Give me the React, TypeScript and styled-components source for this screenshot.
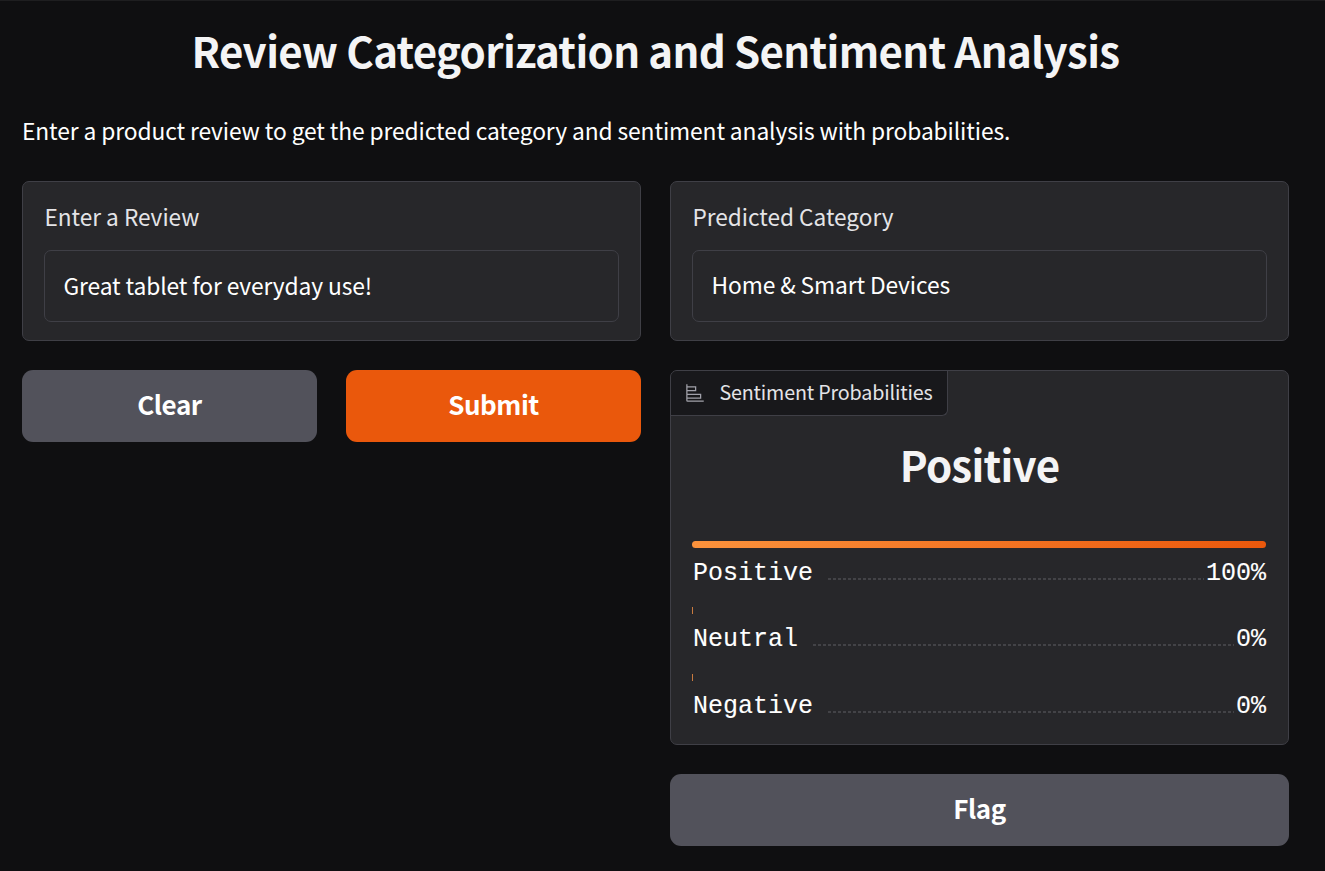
import React from "react";
import styled, { createGlobalStyle } from "styled-components";

const GlobalStyle = createGlobalStyle`
  * { box-sizing: border-box; }
  body {
    margin: 0;
    background: #0f0f11;
    color: #f4f4f5;
    font-family: "Noto Sans CJK SC", "Open Sans", sans-serif;
  }
`;

const Page = styled.main`
  height: 871px;
  padding: 0 36px 0 22px;
  border-top: 1px solid #1e1e20;
  overflow: hidden;
`;

const Title = styled.h1`
  margin: 18px 0 0;
  height: 62px;
  line-height: 62px;
  font-size: 42px;
  font-weight: 700;
  letter-spacing: -0.66px;
  text-align: center;
  white-space: nowrap;
`;

const Description = styled.p`
  margin: 32px 0 0;
  height: 36px;
  line-height: 36px;
  font-size: 22.8px;
  letter-spacing: -0.11px;
  color: #fff;
  white-space: nowrap;
`;

const Columns = styled.div`
  display: grid;
  grid-template-columns: 1fr 1fr;
  gap: 29px;
  margin-top: 32px;
`;

const Column = styled.div`
  display: flex;
  flex-direction: column;
  gap: 29px;
`;

const Card = styled.section`
  border: 1px solid #3f3f46;
  border-radius: 7px;
  background: #27272a;
`;

const FieldCard = styled(Card)`
  height: 160px;
  padding: 17px 21px;
`;

const FieldLabel = styled.label`
  display: block;
  height: 36px;
  margin-bottom: 15px;
  padding-left: 0.5px;
  line-height: 36px;
  font-size: 22.6px;
  color: #e4e4e7;
`;

const FieldValue = styled.div<{ $lift?: number }>`
  height: 72px;
  padding: 0 18.5px;
  border: 1px solid #3f3f46;
  border-radius: 7px;
  line-height: ${(p) => 70 - (p.$lift ?? 0) * 2}px;
  font-size: 22.8px;
  letter-spacing: -0.12px;
  color: #fff;
`;

const ButtonRow = styled.div`
  display: flex;
  gap: 29px;
`;

const Button = styled.button<{ $primary?: boolean }>`
  flex: 1 1 0;
  height: 72px;
  min-height: 72px;
  padding: 0 0 4px;
  border: 0;
  border-radius: 11px;
  background: ${(p) => (p.$primary ? "#ea580c" : "#52525b")};
  color: #fff;
  font-family: inherit;
  font-size: 26px;
  font-weight: 700;
  letter-spacing: -0.45px;
  line-height: 68px;
`;

const ResultCard = styled(Card)`
  height: 375px;
`;

const Tab = styled.div`
  display: flex;
  align-items: center;
  width: 277px;
  height: 45px;
  padding-left: 14px;
  border: solid #3f3f46;
  border-width: 0 1px 1px 0;
  border-radius: 6px 0 6px 0;
  background: #18181b;
  color: #e4e4e7;
  font-size: 19.7px;
  letter-spacing: -0.16px;
  line-height: 42px;
  white-space: nowrap;

  span {
    height: 44px;
  }
`;

const ChartIcon = styled.svg`
  width: 20px;
  height: 20px;
  margin-right: 14.4px;
  color: #a1a1aa;
`;

const Headline = styled.h2`
  height: 60px;
  margin: 17px 0 0;
  line-height: 61px;
  font-size: 42px;
  font-weight: 700;
  letter-spacing: -0.7px;
  text-align: center;
`;

const Rows = styled.div`
  padding: 48px 22px 0 21px;
`;

const Row = styled.div`
  height: 66.4px;
`;

const Bar = styled.div<{ $empty: boolean }>`
  height: 7px;
  min-width: 1px;
  border-radius: ${(p) => (p.$empty ? 0 : 4)}px;
  background: ${(p) => (p.$empty ? "#c97a3f" : "linear-gradient(to right, #fb923c, #ea580c)")};
`;

const RowText = styled.div`
  display: flex;
  height: 36px;
  margin-top: 7px;
  padding-left: 1px;
  line-height: 37px;
  font-family: "Liberation Mono", monospace;
  font-size: 25px;
  color: #fff;
  -webkit-text-stroke: 0.1px #fff;
`;

const Leader = styled.span`
  flex: 1;
  height: 2px;
  margin: 23px 2px 0 15px;
  background: repeating-linear-gradient(to right, #434347 0 3px, transparent 3px 5px);
`;

const results = [
  { name: "Positive", score: 100 },
  { name: "Neutral", score: 0 },
  { name: "Negative", score: 0 },
];

export default function App() {
  return (
    <>
      <GlobalStyle />
      <Page>
        <Title>Review Categorization and Sentiment Analysis</Title>
        <Description>
          Enter a product review to get the predicted category and sentiment analysis with probabilities.
        </Description>
        <Columns>
          <Column>
            <FieldCard>
              <FieldLabel>Enter a Review</FieldLabel>
              <FieldValue>Great tablet for everyday use!</FieldValue>
            </FieldCard>
            <ButtonRow>
              <Button>Clear</Button>
              <Button $primary>Submit</Button>
            </ButtonRow>
          </Column>
          <Column>
            <FieldCard>
              <FieldLabel>Predicted Category</FieldLabel>
              <FieldValue $lift={1}>Home &amp; Smart Devices</FieldValue>
            </FieldCard>
            <ResultCard>
              <Tab>
                <ChartIcon viewBox="0 0 32 32">
                  <path
                    fill="currentColor"
                    d="M4 2H2v26a2 2 0 0 0 2 2h26v-2H4v-3h22v-8H4v-4h14V5H4Zm20 17v4H4v-4ZM16 7v4H4V7Z"
                  />
                </ChartIcon>
                <span>Sentiment Probabilities</span>
              </Tab>
              <Headline>Positive</Headline>
              <Rows>
                {results.map((r) => (
                  <Row key={r.name}>
                    <Bar $empty={r.score === 0} style={{ width: `${r.score}%` }} />
                    <RowText>
                      <span>{r.name}</span>
                      <Leader />
                      <span>{r.score}%</span>
                    </RowText>
                  </Row>
                ))}
              </Rows>
            </ResultCard>
            <Button>Flag</Button>
          </Column>
        </Columns>
      </Page>
    </>
  );
}
